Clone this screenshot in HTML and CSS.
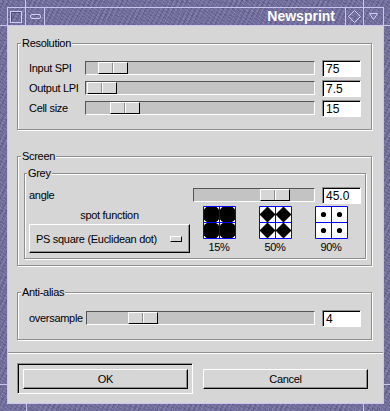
FILE: index.html
```html
<!DOCTYPE html>
<html lang="en">
  <head>
    <meta charset="UTF-8" />
    <title>Newsprint</title>
    <link rel="stylesheet" href="styles.css">
  </head>
  <body>
    <div class="window">
      <div class="titlebar">
        <div class="tb-btn tb-box"><span class="ico-box"></span></div>
        <div class="tb-btn tb-min"><span class="ico-min"></span></div>
        <div class="tb-title">Newsprint</div>
        <div class="tb-btn tb-dia">
          <svg width="13" height="13" viewBox="0 0 13 13"><polygon points="6.5,0.5 12.5,6.5 6.5,12.5 0.5,6.5" fill="none" stroke="#d4d0f4" /></svg>
        </div>
        <div class="tb-btn tb-tri">
          <svg width="9" height="7" viewBox="0 0 9 7"><polygon points="0.5,0.5 8.5,0.5 4.5,6.5" fill="none" stroke="#d4d0f4" /></svg>
        </div>
      </div>

      <div class="client">
        <div class="main">
          <fieldset class="frame res">
            <legend>Resolution</legend>
            <div class="rows">
              <div class="row">
                <span class="lbl">Input SPI</span>
                <div class="trough"><div class="thumb" style="margin-left:12px"></div></div>
                <div class="entry">75</div>
              </div>
              <div class="row">
                <span class="lbl">Output LPI</span>
                <div class="trough"><div class="thumb" style="margin-left:1px"></div></div>
                <div class="entry">7.5</div>
              </div>
              <div class="row">
                <span class="lbl">Cell size</span>
                <div class="trough"><div class="thumb" style="margin-left:24px"></div></div>
                <div class="entry">15</div>
              </div>
            </div>
          </fieldset>

          <fieldset class="frame screen">
            <legend>Screen</legend>
            <fieldset class="frame grey">
              <legend>Grey</legend>
              <div class="grey-body">
                <div class="row">
                  <span class="lbl grow">angle</span>
                  <div class="trough short"><div class="thumb" style="margin-left:66px"></div></div>
                  <div class="entry">45.0</div>
                </div>
                <div class="spot">
                  <div class="spot-left">
                    <div class="spot-lbl">spot function</div>
                    <div class="optmenu">
                      <span>PS square (Euclidean dot)</span>
                      <span class="ind"></span>
                    </div>
                  </div>
                  <div class="previews">
                    <div class="pv">
                      <svg width="33" height="33" viewBox="0 0 33 33">
                        <rect width="33" height="33" fill="#fff" />
                        <circle cx="8.5" cy="8.5" r="9" fill="#000" />
                        <circle cx="24.5" cy="8.5" r="9" fill="#000" />
                        <circle cx="8.5" cy="24.5" r="9" fill="#000" />
                        <circle cx="24.5" cy="24.5" r="9" fill="#000" />
                        <path d="M0.5 0.5H32.5V32.5H0.5Z M16.5 0.5V32.5 M0.5 16.5H32.5" fill="none" stroke="#0000ff" />
                      </svg>
                      <span>15%</span>
                    </div>
                    <div class="pv">
                      <svg width="33" height="33" viewBox="0 0 33 33">
                        <rect width="33" height="33" fill="#fff" />
                        <path d="M8.5 0.5L16.5 8.5L8.5 16.5L0.5 8.5Z M24.5 0.5L32.5 8.5L24.5 16.5L16.5 8.5Z M8.5 16.5L16.5 24.5L8.5 32.5L0.5 24.5Z M24.5 16.5L32.5 24.5L24.5 32.5L16.5 24.5Z" fill="#000" />
                        <path d="M0.5 0.5H32.5V32.5H0.5Z M16.5 0.5V32.5 M0.5 16.5H32.5" fill="none" stroke="#0000ff" />
                      </svg>
                      <span>50%</span>
                    </div>
                    <div class="pv">
                      <svg width="33" height="33" viewBox="0 0 33 33">
                        <rect width="33" height="33" fill="#fff" />
                        <circle cx="8.5" cy="8.5" r="2.6" fill="#000" />
                        <circle cx="24.5" cy="8.5" r="2.6" fill="#000" />
                        <circle cx="8.5" cy="24.5" r="2.6" fill="#000" />
                        <circle cx="24.5" cy="24.5" r="2.6" fill="#000" />
                        <path d="M0.5 0.5H32.5V32.5H0.5Z M16.5 0.5V32.5 M0.5 16.5H32.5" fill="none" stroke="#0000ff" />
                      </svg>
                      <span>90%</span>
                    </div>
                  </div>
                </div>
              </div>
            </fieldset>
          </fieldset>

          <fieldset class="frame alias">
            <legend>Anti-alias</legend>
            <div class="rows">
              <div class="row">
                <span class="lbl wide">oversample</span>
                <div class="trough"><div class="thumb" style="margin-left:41px"></div></div>
                <div class="entry">4</div>
              </div>
            </div>
          </fieldset>
        </div>

        <div class="sep"></div>

        <div class="actions">
          <div class="defframe">
            <div class="btn">OK</div>
          </div>
          <div class="btn cancel">Cancel</div>
        </div>
      </div>
    </div>
  </body>
</html>
```

FILE: styles.css
```css
body {
  margin: 0;
  font-family: "Liberation Sans", Arial, sans-serif;
  font-size: 11px;
  letter-spacing: -0.3px;
  color: #000;
}

/* window frame */
.window {
  position: relative;
  width: 390px;
  height: 411px;
  box-sizing: border-box;
  padding: 7px 6px 7px 7px;
  display: flex;
  flex-direction: column;
  background:
    repeating-linear-gradient(37deg, rgba(255,255,255,0.10) 0 1px, transparent 1px 3px),
    repeating-linear-gradient(-61deg, rgba(0,0,0,0.12) 0 1px, transparent 1px 4px),
    repeating-linear-gradient(113deg, rgba(255,255,255,0.07) 0 2px, transparent 2px 5px),
    repeating-linear-gradient(9deg, rgba(30,20,80,0.10) 0 1px, transparent 1px 6px),
    #6e6a9c;
}
/* little notches in the frame */
.window::before {
  content: "";
  position: absolute;
  left: 25px;
  top: 0;
  width: 1px;
  height: 7px;
  background: #c9c5ee;
  box-shadow: 338px 0 #c9c5ee, 1px 404px #c9c5ee, 338px 404px #c9c5ee;
}
.window::after {
  content: "";
  position: absolute;
  left: 0;
  top: 25px;
  width: 7px;
  height: 1px;
  background: #c9c5ee;
  box-shadow: 383px 0 #c9c5ee, 0 359px #c9c5ee, 383px 359px #c9c5ee;
}

.titlebar {
  display: flex;
  height: 19px;
  box-sizing: border-box;
  border: 1px solid #c9c5ee;
}
.tb-btn {
  display: flex;
  align-items: center;
  justify-content: center;
  border-right: 1px solid #c9c5ee;
}
.tb-box { width: 17px; }
.tb-min { width: 18px; }
.tb-dia { width: 17px; }
.tb-tri { width: 19px; border-right: none; }
.tb-title {
  flex: 1;
  text-align: right;
  padding-right: 10px;
  color: #fff;
  font-weight: bold;
  font-size: 14px;
  letter-spacing: 0;
  line-height: 17px;
  border-right: 1px solid #c9c5ee;
}
.ico-box {
  width: 12px;
  height: 12px;
  box-sizing: border-box;
  margin: 1px 2px 0 1px;
  border: 1px solid #d4d0f4;
  box-shadow: inset 1px 1px 0 #4e4a7c;
}
.ico-min {
  width: 11px;
  height: 5px;
  box-sizing: border-box;
  border: 1px solid #d4d0f4;
  border-radius: 2px;
}

/* dialog body */
.client {
  flex: 1;
  background: #d6d6d6;
  border: 1px solid #c9c5ee;
  border-top: none;
  display: flex;
  flex-direction: column;
}
.main {
  padding: 11px 11px 12px 9px;
}

.frame {
  margin: 0;
  min-width: 0;
  border: 1px solid #8e8e8e;
  box-shadow: 1px 1px 0 #fff, inset 1px 1px 0 #fff;
}
.frame legend {
  padding: 0 1px;
  line-height: 12px;
  background: #d6d6d6;
}
.res { padding: 9px 10px 11px 3px; }
.screen { padding: 5px 5px 6px 3px; margin-top: 20px; }
.grey { padding: 6px 4px 5px 2px; margin-left: 3px; }
.alias { padding: 10px 10px 11px 3px; margin-top: 20px; }
.rows { padding-left: 8px; }
.grey-body { padding-left: 2px; }

.row {
  display: flex;
  align-items: center;
  height: 20px;
}
.lbl { width: 56px; flex: none; white-space: nowrap; }
.lbl.wide { width: 57px; }
.lbl.grow { flex: 1; }

.trough {
  flex: 1;
  height: 14px;
  box-sizing: border-box;
  border: 1px solid;
  border-color: #555 #fff #fff #555;
  background: #c3c3c3;
}
.trough.short {
  flex: none;
  width: 122px;
}
.thumb {
  width: 30px;
  height: 12px;
  box-sizing: border-box;
  border: 1px solid;
  border-color: #fff #000 #000 #fff;
  background: linear-gradient(to right, transparent 13px, #8e8e8e 13px 14px, #fff 14px 15px, transparent 15px), #d6d6d6;
}

.entry {
  width: 39px;
  height: 17px;
  flex: none;
  margin-left: 7px;
  box-sizing: border-box;
  padding-left: 3px;
  background: #fff;
  border: 1px solid;
  border-color: #8e8e8e #fff #fff #8e8e8e;
  box-shadow: inset 1px 1px 0 #000;
  font-size: 12px;
  letter-spacing: 0;
  line-height: 16px;
}

/* spot function */
.spot { display: flex; }
.spot-left {
  width: 161px;
  padding-top: 4px;
}
.spot-lbl {
  text-align: center;
  line-height: 12px;
  margin-bottom: 3px;
}
.optmenu {
  height: 29px;
  box-sizing: border-box;
  display: flex;
  align-items: center;
  justify-content: space-between;
  padding: 0 7px 0 6px;
  border: 1px solid;
  border-color: #fff #000 #000 #fff;
  box-shadow: inset -1px -1px 0 #8e8e8e;
}
.ind {
  width: 12px;
  height: 6px;
  box-sizing: border-box;
  border: 1px solid;
  border-color: #fff #000 #000 #fff;
}
.previews {
  display: flex;
  margin-left: 1px;
  padding-top: 1px;
}
.pv {
  width: 56px;
  display: flex;
  flex-direction: column;
  align-items: center;
}
.pv svg { display: block; }
.pv span {
  margin-top: 2px;
  line-height: 12px;
}

.sep {
  border-top: 1px solid #8e8e8e;
  border-bottom: 1px solid #fff;
}

.actions {
  display: flex;
  align-items: flex-start;
  padding: 9px 0 0 9px;
}
.defframe {
  padding: 5px 4px 4px 5px;
  border: 1px solid;
  border-color: #8e8e8e #fff #fff #8e8e8e;
  box-shadow: inset 1px 1px 0 #000;
}
.btn {
  width: 165px;
  height: 20px;
  box-sizing: border-box;
  display: flex;
  align-items: center;
  justify-content: center;
  border: 1px solid;
  border-color: #fff #000 #000 #fff;
  box-shadow: inset -1px -1px 0 #8e8e8e;
}
.cancel {
  margin: 6px 0 0 10px;
}
```
